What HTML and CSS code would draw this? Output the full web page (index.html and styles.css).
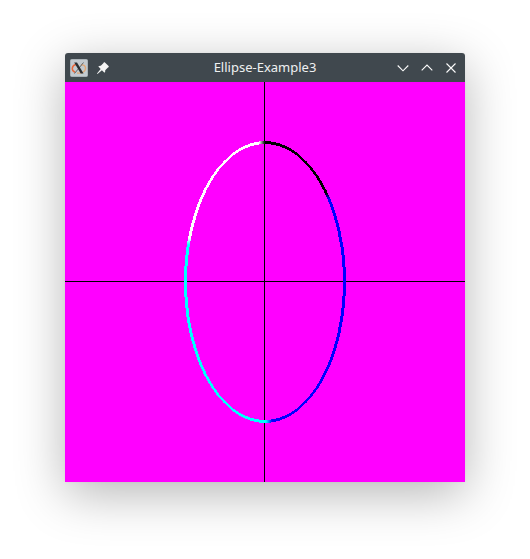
FILE: index.html
```
<!DOCTYPE html>
<html lang="en">
<head>
<meta charset="utf-8">
<title>Ellipse-Example3</title>
<link rel="stylesheet" href="styles.css">
</head>
<body>
<main class="window">
  <header class="titlebar">
    <div class="left">
      <svg class="icon" width="18" height="18" viewBox="0 0 18 18">
        <rect x=".5" y=".5" width="17" height="17" rx="1" fill="#c3cacf" stroke="#aab2b7"/>
        <path d="M6 5.500C1.500 6.500 1 11.500 5 13.300" fill="none" stroke="#e8683c" stroke-width="1.500"/>
        <path d="M7 14C12 15 16 12 15.500 8.500 15 6.500 13 5.700 11 6" fill="none" stroke="#e2a878" stroke-width="1.300"/>
        <path d="M13.500 3.500L4.500 14.500" stroke="#555b5f" stroke-width=".9"/>
        <path d="M4.200 3.500H7L13.500 14.500H10.700Z" fill="#2a2e31"/>
      </svg>
      <svg class="icon" width="14" height="14" viewBox="0 0 14 14">
        <path d="M8.700 1.200L12.800 5.300C12.800 6 12.300 6.600 11.700 6.700L9.200 9.200C9.400 10.300 9.100 11.200 8.500 11.700L5.900 9.300 1.500 13 1 12.500 4.700 8.100 2.300 5.500C2.900 4.900 3.800 4.700 4.800 4.800L7.300 2.300C7.400 1.700 8 1.200 8.700 1.200Z" fill="#f5f5f5"/>
      </svg>
    </div>
    <h1 class="title">Ellipse-Example3</h1>
    <div class="controls">
      <svg width="12" height="12" viewBox="0 0 12 12"><path d="M.7 3.500L6 8.800 11.300 3.500"/></svg>
      <svg width="12" height="12" viewBox="0 0 12 12"><path d="M.7 8.300L6 3 11.300 8.300"/></svg>
      <svg width="12" height="12" viewBox="0 0 12 12"><path d="M1.500 1.500L10.500 10.500M10.500 1.500L1.500 10.500"/></svg>
    </div>
  </header>
  <svg class="canvas" width="400" height="400" viewBox="0 0 400 400" shape-rendering="crispEdges">
    <defs>
      <linearGradient id="top" gradientUnits="userSpaceOnUse" x1="194" x2="200" y1="0" y2="0"><stop stop-color="#fff"/><stop offset="1" stop-color="#000"/></linearGradient>
      <linearGradient id="bottom" gradientUnits="userSpaceOnUse" x1="201" x2="207" y1="0" y2="0"><stop stop-color="#0ff"/><stop offset="1" stop-color="#00f"/></linearGradient>
      <linearGradient id="west" gradientUnits="userSpaceOnUse" x1="0" x2="0" y1="156" y2="163"><stop stop-color="#fff"/><stop offset="1" stop-color="#0ff"/></linearGradient>
      <linearGradient id="east" gradientUnits="userSpaceOnUse" x1="0" x2="0" y1="111" y2="117"><stop stop-color="#000"/><stop offset="1" stop-color="#00f"/></linearGradient>
    </defs>
    <rect width="400" height="400" fill="#f0f"/>
    <path d="M0 199H400V200H0ZM199 0H200V400H199Z"/>
    <path fill="url(#top)" d="M159.100 78.900A79.500 139.500 0 0 1 240.900 78.900V81.900A79.500 139.500 0 0 0 159.100 81.900Z"/>
    <path fill="url(#bottom)" d="M159.100 318.100A79.500 139.500 0 0 0 240.900 318.100V321.100A79.500 139.500 0 0 1 159.100 321.100Z"/>
    <path fill="url(#west)" d="M159.100 78.800A79.500 139.500 0 0 0 159.100 321.200H162.100A79.500 139.500 0 0 1 162.100 78.800Z"/>
    <path fill="url(#east)" d="M240.900 78.800A79.500 139.500 0 0 1 240.900 321.200H237.900A79.500 139.500 0 0 0 237.900 78.800Z"/>
  </svg>
</main>
</body>
</html>
```
FILE: styles.css
```
body {
  margin: 0;
  padding: 53px 65px 77px;
  background: #fff;
  font-family: "Noto Sans", sans-serif;
}
.window {
  width: 400px;
  border-radius: 3px 3px 0 0;
  box-shadow: 0 12px 50px rgba(0, 0, 0, .29), 0 0 3px rgba(0, 0, 0, .05);
}
.titlebar {
  display: grid;
  grid-template-columns: 80px 1fr 80px;
  align-items: center;
  box-sizing: border-box;
  height: 29px;
  border-radius: 3px 3px 0 0;
  background: #40484e;
}
.left {
  display: flex;
  align-items: center;
  gap: 8px;
  padding-left: 5px;
}
.title {
  margin: 0;
  color: #eff0f1;
  font-size: 13px;
  font-weight: 400;
  line-height: 29px;
  text-align: center;
}
.controls {
  display: flex;
  justify-content: flex-end;
  gap: 12px;
  padding-right: 8px;
}
.controls path {
  fill: none;
  stroke: #fcfcfc;
  stroke-width: 1.100;
}
.canvas {
  display: block;
}
```
